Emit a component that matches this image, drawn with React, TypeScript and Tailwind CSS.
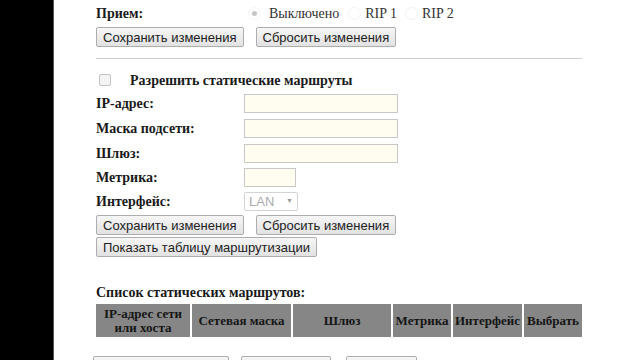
export default function App() {
  const btn =
    "h-[20px] px-[6px] border border-[#adadad] rounded-[2px] bg-gradient-to-b from-[#f6f6f6] to-[#e2e2e2] text-[13px] leading-none text-[#222] font-['Liberation_Sans',Arial,sans-serif] whitespace-nowrap";
  const label = "w-[148px] shrink-0 font-bold text-[14px] text-[#1a1a1a]";
  const input = "h-[19px] border border-[#c8c8c8] bg-[#fffdf0]";

  return (
    <div className="flex min-h-[360px] bg-white font-['Liberation_Serif','Times_New_Roman',serif]">
      <div className="w-[54px] shrink-0 bg-black border-r border-[#555]" />
      <div className="pl-[42px] w-[530px]">
        {/* RIP receive */}
        <div className="flex items-center h-[26px]">
          <span className={label}>Прием:</span>
          <div className="flex items-center text-[14px] text-[#333]">
            <span className="w-[13px] h-[13px] rounded-full border border-[#f6f6f6] flex items-center justify-center mr-[8px] ml-[4px]">
              <span className="w-[5px] h-[5px] rounded-full bg-[#c4c4c4]" />
            </span>
            <span className="mr-[9px]">Выключено</span>
            <span className="w-[13px] h-[13px] rounded-full border border-[#f2f2f2] mr-[4px]" />
            <span className="mr-[8px]">RIP 1</span>
            <span className="w-[13px] h-[13px] rounded-full border border-[#f2f2f2] mr-[4px]" />
            <span>RIP 2</span>
          </div>
        </div>
        <div className="flex gap-[12px] mt-[1px]">
          <button className={btn}>Сохранить изменения</button>
          <button className={btn}>Сбросить изменения</button>
        </div>

        <div className="mt-[11px] border-t border-[#cfcfcf] w-[486px]" />

        {/* Static routes */}
        <div className="flex items-center h-[20px] mt-[11px]">
          <span className="w-[12px] h-[12px] ml-[3px] rounded-[2px] border border-[#c4c4c4] bg-[#f4f4f4]" />
          <span className="ml-[19px] font-bold text-[14px] text-[#1a1a1a]">Разрешить статические маршруты</span>
        </div>

        <div className="flex items-center h-[19px] mt-[4px]">
          <span className={label}>IP-адрес:</span>
          <div className={input + " w-[154px]"} />
        </div>
        <div className="flex items-center h-[19px] mt-[6px]">
          <span className={label}>Маска подсети:</span>
          <div className={input + " w-[154px]"} />
        </div>
        <div className="flex items-center h-[19px] mt-[6px]">
          <span className={label}>Шлюз:</span>
          <div className={input + " w-[154px]"} />
        </div>
        <div className="flex items-center h-[19px] mt-[5px]">
          <span className={label}>Метрика:</span>
          <div className={input + " w-[52px]"} />
        </div>
        <div className="flex items-center h-[19px] mt-[5px]">
          <span className={label}>Интерфейс:</span>
          <div className="h-[19px] w-[54px] border border-[#d4d4d4] rounded-[2px] bg-white flex items-center px-[4px] font-['Liberation_Sans',Arial,sans-serif] text-[13px] text-[#aaa]">
            <span>LAN</span>
            <span className="ml-auto text-[7px] text-[#999]">▼</span>
          </div>
        </div>

        <div className="flex gap-[12px] mt-[4px]">
          <button className={btn}>Сохранить изменения</button>
          <button className={btn}>Сбросить изменения</button>
        </div>
        <div className="flex mt-[2px]">
          <button className={btn}>Показать таблицу маршрутизации</button>
        </div>

        {/* List */}
        <div className="mt-[26px] h-[18px] flex items-center font-bold text-[14px] text-[#1a1a1a]">
          Список статических маршрутов:
        </div>
        <table className="mt-[1px] border-separate border-spacing-[2px] -ml-[2px] text-[13px] font-bold text-[#151515]">
          <thead>
            <tr className="h-[33px]">
              <th className="w-[94px] bg-[#868686] leading-[14px] font-bold">IP-адрес сети<br />или хоста</th>
              <th className="w-[99px] bg-[#868686] font-bold">Сетевая маска</th>
              <th className="w-[98px] bg-[#868686] font-bold">Шлюз</th>
              <th className="w-[58px] bg-[#868686] font-bold">Метрика</th>
              <th className="w-[69px] bg-[#868686] font-bold">Интерфейс</th>
              <th className="w-[58px] bg-[#868686] font-bold">Выбрать</th>
            </tr>
          </thead>
        </table>

        <div className="flex mt-[17px] -ml-[3px]">
          <button className={btn + " w-[136px]"} aria-label="Удалить выбранные" />
          <button className={btn + " w-[90px] ml-[12px]"} aria-label="Удалить все" />
          <button className={btn + " w-[71px] ml-[15px]"} aria-label="Обновить" />
        </div>
      </div>
    </div>
  );
}
